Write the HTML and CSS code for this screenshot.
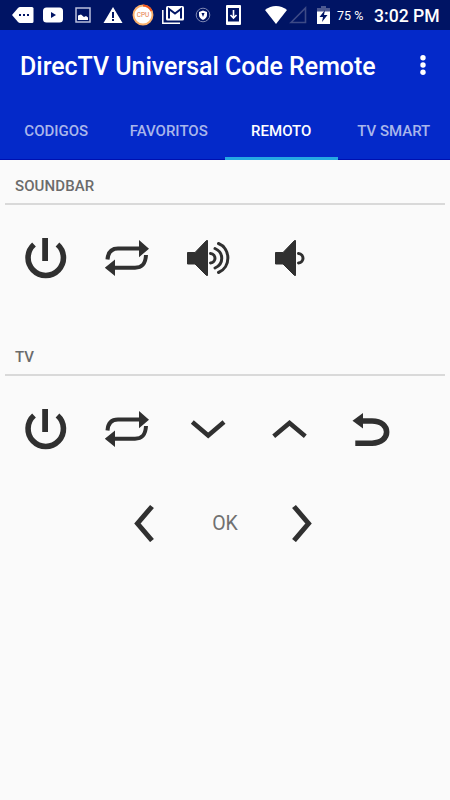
FILE: index.html
```html
<!DOCTYPE html>
<html lang="es">
<head>
<meta charset="utf-8">
<title>DirecTV Universal Code Remote</title>
<link rel="stylesheet" href="styles.css">
</head>
<body>
<svg class="defs" aria-hidden="true">
  <symbol id="power" viewBox="0 0 81 80"><path class="line ring" d="M29 26.5A17.7 17.7 0 1 0 52.5 26.5"/><path d="M37.200 20h5.800v23h-5.800z"/></symbol>
  <symbol id="repeat" viewBox="0 0 81 80"><path class="line thin" d="M21.500 41.500C22 34 26 30.500 32 30.500H54M60 37C59.500 46 56 49.700 49 49.700H28"/><path d="M53 22l10 8.700-10 8.500zM29 41.500v16.500L18.800 49.700z"/></symbol>
</svg>
<header class="status">
  <div class="notices">
    <svg width="22" height="18" viewBox="0 0 22 18"><path fill="#fff" d="M0 9l6-7q1-1 2-1h12q1.500 0 1.500 1.500v13Q21.500 17 20 17H8q-1 0-2-1z"/><path class="navy" d="M7 8h2v2H7zM11 8h2v2h-2zM15 8h2v2h-2z"/></svg>
    <svg width="20" height="16" viewBox="0 0 20 16"><rect width="20" height="15" y=".5" rx="3.500" fill="#fff"/><path class="navy" d="M8 5l5 3-5 3z"/></svg>
    <svg width="16" height="16" viewBox="0 0 16 16"><path fill="none" stroke="#b9bfdb" stroke-width="1.500" d="M1 1h14v14H1z"/><path fill="#fff" d="M3 13V8.500l3-1 3 2.500 2-1 2 1.500V13z"/></svg>
    <svg width="20" height="18" viewBox="0 0 20 18"><path fill="#fff" d="M10 1l9.500 16H.5z"/><path class="navy" d="M9 6h2v6H9zM9 13h2v2H9z"/></svg>
    <svg width="22" height="22" viewBox="0 0 22 22"><circle cx="11" cy="11" r="9.500" fill="#fff" stroke="#f9b06c" stroke-width="1.900"/><path d="M11 1.500a9.500 9.500 0 0 1 8.500 5.500" fill="none" stroke="#f2561d" stroke-width="2"/><text x="11" y="13.300" text-anchor="middle" class="cpu">CPU</text></svg>
    <svg width="22" height="18" viewBox="0 0 22 18"><path fill="none" stroke="#fff" stroke-width="1.500" d="M.8 4v13.200H18"/><rect x="4" width="18" height="14.500" rx="1.500" fill="#fff"/><path fill="none" stroke="#001464" stroke-width="2" d="M7 12.500V3L13 7.500 19 3v9.500"/></svg>
    <svg width="16" height="16" viewBox="0 0 16 16"><circle cx="8" cy="8" r="6.800" fill="none" stroke="#7f88b3"/><path fill="#fff" d="M8 3.500l4 1.500v3q0 3-4 5-4-2-4-5V5z"/><path class="navy" d="M6.500 6h3L8 10z"/></svg>
    <svg width="15" height="20" viewBox="0 0 15 20"><path fill="#fff" fill-rule="evenodd" d="M0 1q0-1 1-1h13q1 0 1 1v18q0 1-1 1H1q-1 0-1-1zM2 3v13.500h11V3z"/><path fill="none" stroke="#fff" stroke-width="1.600" d="M7.500 5v8M4.500 10l3 3 3-3"/></svg>
  </div>
  <svg class="wifi" width="22" height="18" viewBox="0 0 22 18"><path fill="#fff" d="M0 4Q5 0 11 0t11 4L11 18z"/></svg>
  <svg class="signal" width="18" height="18" viewBox="0 0 18 18"><path fill="none" stroke="#3d4a86" stroke-width="1.600" d="M2 16.500L16.500 2v14.500z"/></svg>
  <svg class="battery" width="13" height="18" viewBox="0 0 13 18"><path fill="#4d5991" d="M4 0h5v2h4v5H0V2h4z"/><path fill="#fff" d="M0 5.500h13V18H0z"/><path class="navy" d="M8 4L2.500 11H6l-1 5 5.500-7H7z"/></svg>
  <span class="percent">75 %</span>
  <span class="time">3:02 PM</span>
</header>
<div class="appbar">
  <div class="toolbar">
    <h1>DirecTV Universal Code Remote</h1>
    <svg width="6" height="20" viewBox="0 0 6 20" fill="#fff"><circle cx="3" cy="2.700" r="2.700"/><circle cx="3" cy="10" r="2.700"/><circle cx="3" cy="17.300" r="2.700"/></svg>
  </div>
  <nav class="tabs">
    <a class="tab">CODIGOS</a>
    <a class="tab">FAVORITOS</a>
    <a class="tab active">REMOTO</a>
    <a class="tab">TV SMART</a>
  </nav>
</div>
<main>
  <section class="device">
    <h2>SOUNDBAR</h2>
    <div class="keys">
      <svg class="key"><use href="#power"/></svg>
      <svg class="key"><use href="#repeat"/></svg>
      <svg class="key" viewBox="0 0 81 80"><path class="body" d="M20.500 34.500h7.500L39.500 22.500h1v35h-1L28 46h-7.500z"/><path class="line wave" d="M43.500 35.500c6 .5 6 9 0 9.500M48 30.500c9 4 9 15.500 0 19.500M51.500 25.500c12.500 5 12.500 24 0 29"/></svg>
      <svg class="key" viewBox="0 0 81 80"><path class="body" d="M27.500 34.500h7.500L46.500 22.500h1v35h-1L35 46h-7.500z"/><path class="line wave" d="M50.500 35.500c6 .5 6 9 0 9.500"/></svg>
    </div>
  </section>
  <section class="device">
    <h2>TV</h2>
    <div class="keys">
      <svg class="key"><use href="#power"/></svg>
      <svg class="key"><use href="#repeat"/></svg>
      <svg class="key" viewBox="0 0 81 80"><path class="line chevron" d="M25.300 33L41.200 46.500 57 33"/></svg>
      <svg class="key" viewBox="0 0 81 80"><path class="line chevron" d="M25.700 47.300L41.500 34 57.300 47.300"/></svg>
      <svg class="key" viewBox="0 0 81 80"><path class="line ring" d="M33 32H43C62.500 32 62.500 54.200 43 54.200H26.300"/><path d="M23.500 31.800L34 24v15.500z"/></svg>
    </div>
    <div class="pad">
      <svg width="20" height="38" viewBox="0 0 20 38"><path class="line arrow" d="M18 2.500L3.500 19.500 18 36.500"/></svg>
      <span class="ok">OK</span>
      <svg width="20" height="38" viewBox="0 0 20 38"><path class="line arrow" d="M2 2.500L16.500 19.500 2 36.500"/></svg>
    </div>
  </section>
</main>
</body>
</html>
```
FILE: styles.css
```css
* { box-sizing: border-box; }
body { margin: 0; height: 800px; overflow: hidden; background: #fafafa; font-family: Roboto, "Liberation Sans", sans-serif; }
svg { display: block; flex: none; }
h1, h2 { margin: 0; }
.defs { display: none; }
.navy { fill: #001464; }
.cpu { font-size: 6.500px; fill: #e67a45; }

.status { display: flex; align-items: center; height: 30px; padding-left: 8px; background: #001464; color: #fff; }
.notices { display: grid; grid-template-columns: repeat(8, 30px); align-items: center; justify-items: center; }
.wifi { margin-left: 17px; }
.signal { margin-left: 2px; }
.battery { margin-left: 10px; }
.percent { width: 27px; margin-left: 7px; font-size: 12.500px; line-height: 30px; padding-top: 1px; white-space: nowrap; }
.time { margin-left: 10px; padding-top: 1px; font-size: 17.600px; font-weight: 500; line-height: 30px; white-space: nowrap; }

.appbar { height: 130px; background: #0429c9; border-bottom: 1px solid #0010b0; }
.toolbar { display: flex; align-items: center; justify-content: space-between; height: 70px; padding: 0 24px 0 20px; color: #fff; }
.toolbar h1 { padding-top: 4px; font-size: 24.950px; font-weight: 500; line-height: 70px; white-space: nowrap; }
.tabs { display: grid; grid-template-columns: repeat(4, 1fr); height: 60px; }
.tab { height: 60px; color: #a9b6eb; font-size: 15px; font-weight: 500; line-height: 63px; text-align: center; white-space: nowrap; }
.tab.active { height: 60px; color: #fff; border-bottom: 3px solid #25a9e3; }

main { padding: 0 5px; }
.device { height: 171px; }
.device h2 { height: 45px; padding: 0 10px; border-bottom: 2px solid #d9d9d9; color: #6b6b6b; font-size: 15px; font-weight: 500; line-height: 53px; letter-spacing: .1px; }
.keys { display: flex; height: 80px; margin-top: 13px; }
.key { width: 81px; height: 80px; fill: #303030; }
.line { fill: none; stroke: #303030; }
.ring { stroke-width: 5.600; }
.thin { stroke-width: 4; }
.wave { stroke-width: 3; stroke-linecap: round; }
.chevron { stroke-width: 4.500; }
.arrow { stroke-width: 5; }
.body { stroke: #303030; stroke-width: 1; stroke-linejoin: round; }
.pad { display: flex; align-items: center; justify-content: space-between; width: 178px; height: 80px; margin: 14px 0 0 128.500px; }
.ok { padding: 1px 0 0 5px; color: #707070; font-size: 19.500px; line-height: 24px; }
```
